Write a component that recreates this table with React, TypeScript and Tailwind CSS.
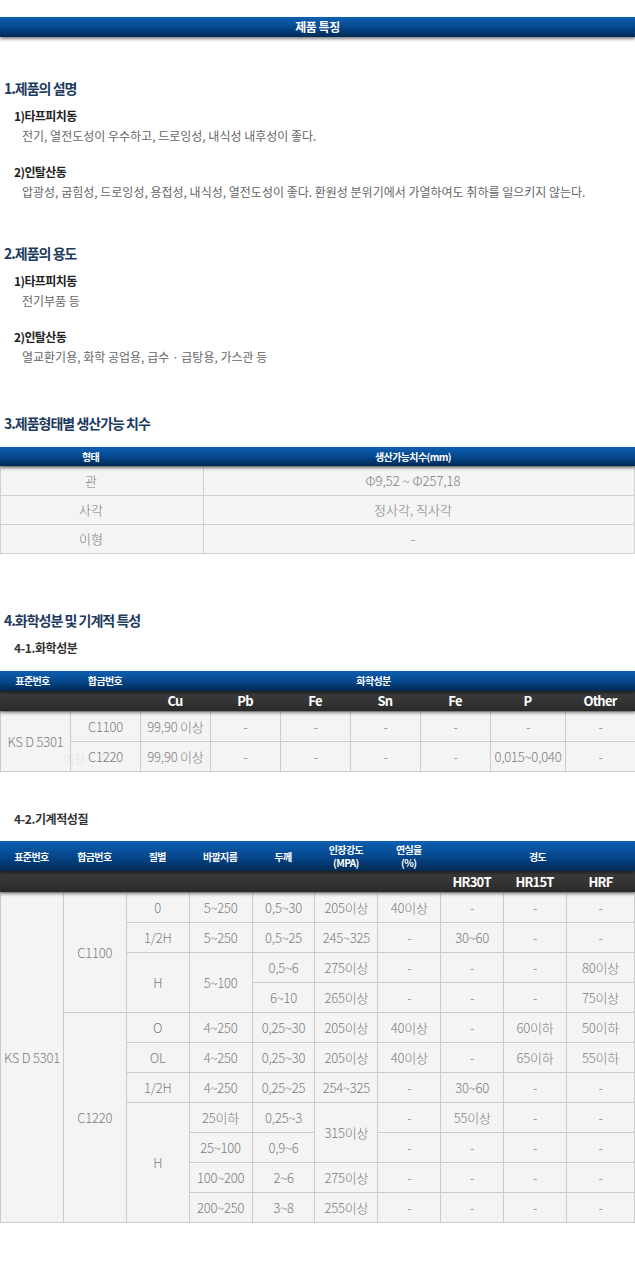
import type { ReactNode } from "react";

type Cell = string | [string, number];

const blueBar =
  "bg-linear-to-b from-[#0c60b2] via-[#06488f] to-[#012a55] shadow-[0_2px_3px_rgba(0,0,0,0.5)] relative z-10";
const darkBar =
  "bg-linear-to-b from-[#3e3e3e] to-[#2a2a2a] shadow-[0_2px_3px_rgba(0,0,0,0.45)] relative z-[5]";

const chemRows: Cell[][] = [
  [["KS D 5301", 2], "C1100", "99,90 이상", "-", "-", "-", "-", "-", "-"],
  ["C1220", "99,90 이상", "-", "-", "-", "-", "0,015~0,040", "-"],
];

const mechRows: Cell[][] = [
  [["KS D 5301", 11], ["C1100", 4], "0", "5~250", "0,5~30", "205이상", "40이상", "-", "-", "-"],
  ["1/2H", "5~250", "0,5~25", "245~325", "-", "30~60", "-", "-"],
  [["H", 2], ["5~100", 2], "0,5~6", "275이상", "-", "-", "-", "80이상"],
  ["6~10", "265이상", "-", "-", "-", "75이상"],
  [["C1220", 7], "O", "4~250", "0,25~30", "205이상", "40이상", "-", "60이하", "50이하"],
  ["OL", "4~250", "0,25~30", "205이상", "40이상", "-", "65이하", "55이하"],
  ["1/2H", "4~250", "0,25~25", "254~325", "-", "30~60", "-", "-"],
  [["H", 4], "25이하", "0,25~3", ["315이상", 2], "-", "55이상", "-", "-"],
  ["25~100", "0,9~6", "-", "-", "-", "-"],
  ["100~200", "2~6", "275이상", "-", "-", "-", "-"],
  ["200~250", "3~8", "255이상", "-", "-", "-", "-"],
];

function SectionTitle({ children, className = "" }: { children: ReactNode; className?: string }) {
  return (
    <h2 className={`pl-[4px] text-[14px] leading-[20px] font-bold tracking-[-1px] text-[#1d3a60] ${className}`}>
      {children}
    </h2>
  );
}

function Item({ title, text, className = "" }: { title: string; text: string; className?: string }) {
  return (
    <div className={className}>
      <p className="pl-[14px] text-[12px] leading-[18px] font-bold tracking-[-0.6px] text-[#222]">{title}</p>
      <p className="pl-[22px] mt-[2px] text-[12px] leading-[18px] text-[#666]">{text}</p>
    </div>
  );
}

function BodyRow({ cells }: { cells: Cell[] }) {
  return (
    <tr className="h-[30px]">
      {cells.map((c, i) => {
        const [text, span] = typeof c === "string" ? [c, 1] : c;
        return (
          <td
            key={i}
            rowSpan={span}
            className="border border-[#cccccc] p-0 text-center align-middle text-[13px] font-light tracking-[-0.2px] text-[#7c7c7c] whitespace-nowrap"
          >
            {text}
          </td>
        );
      })}
    </tr>
  );
}

export default function App() {
  return (
    <div className="w-full min-h-[1276px] bg-white pt-[17px] font-['Noto_Sans_CJK_KR','Noto_Sans',sans-serif]">
      {/* 제품 특징 bar */}
      <div className={`${blueBar} h-[20px] text-center text-[12px] leading-[20px] font-bold tracking-[-0.5px] text-white`}>
        제품 특징
      </div>

      {/* 1 */}
      <SectionTitle className="mt-[41px]">1.제품의 설명</SectionTitle>
      <Item className="mt-[9px]" title="1)타프피치동" text="전기, 열전도성이 우수하고, 드로잉성, 내식성 내후성이 좋다." />
      <Item
        className="mt-[18px]"
        title="2)인탈산동"
        text="압광성, 굽힘성, 드로잉성, 용접성, 내식성, 열전도성이 좋다. 환원성 분위기에서 가열하여도 취하를 일으키지 않는다."
      />

      {/* 2 */}
      <SectionTitle className="mt-[42px]">2.제품의 용도</SectionTitle>
      <Item className="mt-[9px]" title="1)타프피치동" text="전기부품 등" />
      <Item className="mt-[18px]" title="2)인탈산동" text="열교환기용, 화학 공업용, 급수 · 급탕용, 가스관 등" />

      {/* 3 */}
      <SectionTitle className="mt-[47px]">3.제품형태별 생산가능 치수</SectionTitle>
      <div className="mt-[14px]">
        <div className={`${blueBar} h-[19px] grid grid-cols-[203px_1fr] text-[10px] leading-[19px] font-bold tracking-[-0.6px] text-white`}>
          <span className="text-center pr-[22px]">형태</span>
          <span className="text-center pr-[12px]">생산가능치수(mm)</span>
        </div>
        <table className="w-full table-fixed border-collapse bg-[#f4f4f4]">
          <colgroup>
            <col className="w-[203px]" />
            <col />
          </colgroup>
          <tbody>
            {[
              ["관", "Φ9,52 ~ Φ257,18"],
              ["사각", "정사각, 직사각"],
              ["이형", "-"],
            ].map(([a, b]) => (
              <tr key={a} className="h-[29px]">
                <td className="border border-[#d0d0d0] p-0 pr-[22px] text-center text-[13px] font-light text-[#7c7c7c]">{a}</td>
                <td className="border border-[#d0d0d0] p-0 pr-[12px] text-center text-[13px] font-light text-[#7c7c7c]">{b}</td>
              </tr>
            ))}
          </tbody>
        </table>
      </div>

      {/* 4 */}
      <SectionTitle className="mt-[56px]">4.화학성분 및 기계적 특성</SectionTitle>
      <p className="mt-[9px] pl-[14px] text-[12px] leading-[18px] font-bold tracking-[-0.4px] text-[#333]">4-1.화학성분</p>

      <div className="mt-[14px] relative">
        <div className={`${blueBar} h-[20px] grid grid-cols-[70px_70px_1fr] text-[10px] leading-[20px] font-bold tracking-[-0.6px] text-white`}>
          <span className="text-center pr-[5px]">표준번호</span>
          <span className="text-center">합금번호</span>
          <span className="text-center pr-[28px]">화학성분</span>
        </div>
        <div className={`${darkBar} h-[20px] grid grid-cols-[70px_70px_70px_70px_70px_70px_70px_75px_70px] text-[13px] leading-[20px] font-bold tracking-[-0.8px] text-white`}>
          {["", "", "Cu", "Pb", "Fe", "Sn", "Fe", "P", "Other"].map((h, i) => (
            <span key={i} className="text-center">
              {h}
            </span>
          ))}
        </div>
        <table className="w-full table-fixed border-collapse bg-[#f4f4f4]">
          <colgroup>
            {[70, 70, 70, 70, 70, 70, 70, 75, 70].map((w, i) => (
              <col key={i} style={{ width: w }} />
            ))}
          </colgroup>
          <tbody>
            {chemRows.map((r, i) => (
              <BodyRow key={i} cells={r} />
            ))}
          </tbody>
        </table>
        <span className="absolute left-[63px] top-[79px] text-[12px] font-light text-[#e2e2e2]">이형</span>
      </div>

      <p className="mt-[38px] pl-[14px] text-[12px] leading-[18px] font-bold tracking-[-0.4px] text-[#333]">4-2.기계적성질</p>

      <div className="mt-[13px]">
        <div className={`${blueBar} h-[30px] grid grid-cols-[repeat(9,62.9px)_1fr] items-center text-[10px] leading-[13px] font-bold tracking-[-0.6px] text-white`}>
          <span className="text-center">표준번호</span>
          <span className="text-center">합금번호</span>
          <span className="text-center">질별</span>
          <span className="text-center">바깥지름</span>
          <span className="text-center">두께</span>
          <span className="text-center">
            인장강도
            <br />
            (MPA)
          </span>
          <span className="text-center">
            연실율
            <br />
            (%)
          </span>
          <span className="col-span-3 text-center">경도</span>
        </div>
        <div className={`${darkBar} h-[21px] grid grid-cols-[repeat(9,62.9px)_1fr] text-[13px] leading-[21px] font-bold tracking-[-0.8px] text-white`}>
          <span className="col-start-8 text-center">HR30T</span>
          <span className="text-center">HR15T</span>
          <span className="text-center">HRF</span>
        </div>
        <table className="w-full table-fixed border-collapse bg-[#f4f4f4]">
          <colgroup>
            {[0, 1, 2, 3, 4, 5, 6, 7, 8].map((i) => (
              <col key={i} className="w-[62.9px]" />
            ))}
            <col />
          </colgroup>
          <tbody>
            {mechRows.map((r, i) => (
              <BodyRow key={i} cells={r} />
            ))}
          </tbody>
        </table>
      </div>
    </div>
  );
}
